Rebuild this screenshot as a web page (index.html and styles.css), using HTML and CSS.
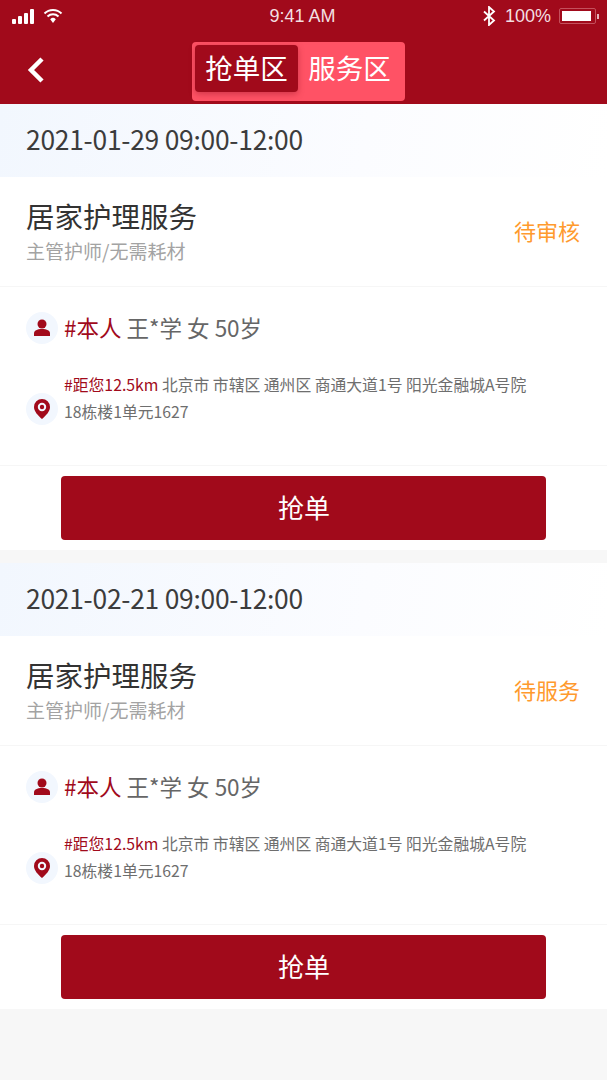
FILE: index.html
```html
<!DOCTYPE html>
<html lang="zh">
<head>
<meta charset="utf-8">
<title>抢单区</title>
<link rel="stylesheet" href="styles.css">
</head>
<body>
<header class="top">
  <div class="status">
    <div class="status-left">
      <svg class="signal" width="24" height="16" viewBox="0 0 24 16"><rect x="0" y="11" width="4" height="5" rx="1"/><rect x="6" y="8" width="4" height="8" rx="1"/><rect x="12" y="5" width="4" height="11" rx="1"/><rect x="18" y="1" width="4" height="15" rx="1"/></svg>
      <svg class="wifi" width="20" height="16" viewBox="0 0 20 16"><path d="M1.5 5.5a12 12 0 0 1 17 0" /><path d="M4.5 8.5a8 8 0 0 1 11 0"/><path class="wifi-dot" d="M7.2 11.2a4 4 0 0 1 5.6 0L10 15z"/></svg>
    </div>
    <div class="time">9:41 AM</div>
    <div class="status-right">
      <svg class="bt" width="14" height="20" viewBox="0 0 14 20"><path d="M2 5.5l10 9-5 4.500V1l5 4.500-10 9"/></svg>
      <span class="pct">100%</span>
      <div class="battery"><div class="battery-fill"></div></div>
      <div class="battery-tip"></div>
    </div>
  </div>
  <nav class="nav">
    <svg class="back" width="20" height="28" viewBox="0 0 20 28"><path d="M16 3L5 14l11 11"/></svg>
    <div class="tabs">
      <div class="tab tab-active">抢单区</div>
      <div class="tab">服务区</div>
    </div>
  </nav>
</header>
<main>
  <section class="card">
    <div class="date">2021-01-29 09:00-12:00</div>
    <div class="service">
      <div>
        <div class="service-name">居家护理服务</div>
        <div class="service-sub">主管护师/无需耗材</div>
      </div>
      <div class="state">待审核</div>
    </div>
    <div class="info">
      <div class="person">
        <span class="icon-dot"><svg width="16" height="18" viewBox="0 0 16 18"><circle cx="8" cy="5" r="4.500"/><path d="M0 17v-2.500C0 11.500 3 10 8 10s8 1.500 8 4.500V17z"/></svg></span>
        <span class="person-text"><span class="red">#本人</span> 王*学 女 50岁</span>
      </div>
      <div class="addr">
        <span class="icon-dot"><svg width="16" height="20" viewBox="0 0 16 20"><path fill-rule="evenodd" d="M8 0a8 8 0 0 1 8 8c0 4.500-4 8.500-8 12C4 16.500 0 12.500 0 8a8 8 0 0 1 8-8zm0 3.800a4.200 4.200 0 1 0 0 8.400 4.200 4.200 0 0 0 0-8.400z"/><circle cx="8" cy="8" r="2.200"/></svg></span>
        <p class="addr-text"><span class="red">#距您12.5km</span> 北京市 市辖区 通州区 商通大道1号 阳光金融城A号院<br>18栋楼1单元1627</p>
      </div>
    </div>
    <div class="action"><button class="grab">抢单</button></div>
  </section>
  <section class="card">
    <div class="date">2021-02-21 09:00-12:00</div>
    <div class="service">
      <div>
        <div class="service-name">居家护理服务</div>
        <div class="service-sub">主管护师/无需耗材</div>
      </div>
      <div class="state">待服务</div>
    </div>
    <div class="info">
      <div class="person">
        <span class="icon-dot"><svg width="16" height="18" viewBox="0 0 16 18"><circle cx="8" cy="5" r="4.500"/><path d="M0 17v-2.500C0 11.500 3 10 8 10s8 1.500 8 4.500V17z"/></svg></span>
        <span class="person-text"><span class="red">#本人</span> 王*学 女 50岁</span>
      </div>
      <div class="addr">
        <span class="icon-dot"><svg width="16" height="20" viewBox="0 0 16 20"><path fill-rule="evenodd" d="M8 0a8 8 0 0 1 8 8c0 4.500-4 8.500-8 12C4 16.500 0 12.500 0 8a8 8 0 0 1 8-8zm0 3.800a4.200 4.200 0 1 0 0 8.400 4.200 4.200 0 0 0 0-8.400z"/><circle cx="8" cy="8" r="2.200"/></svg></span>
        <p class="addr-text"><span class="red">#距您12.5km</span> 北京市 市辖区 通州区 商通大道1号 阳光金融城A号院<br>18栋楼1单元1627</p>
      </div>
    </div>
    <div class="action"><button class="grab">抢单</button></div>
  </section>
</main>
</body>
</html>
```
FILE: styles.css
```css
* { box-sizing: border-box; }
html, body { margin: 0; padding: 0; }
body {
  width: 607px;
  height: 1080px;
  overflow: hidden;
  background: #f7f7f7;
  font-family: "Noto Sans CJK SC", "Noto Sans", sans-serif;
  color: #333;
}
.top { background: #a10a1b; height: 104px; }
.status {
  height: 32px;
  display: flex;
  align-items: center;
  justify-content: space-between;
  position: relative;
  padding: 0 8px 0 12px;
  color: #f3dfe1;
}
.status-left, .status-right { display: flex; align-items: center; }
.signal { fill: #fff; margin-right: 7px; }
.wifi { fill: none; stroke: #fff; stroke-width: 2; }
.wifi-dot { fill: #fff; stroke: none; }
.time {
  position: absolute;
  left: 0;
  right: 2px;
  text-align: center;
  font: 18px "Liberation Sans", sans-serif;
}
.bt { fill: none; stroke: #fff; stroke-width: 1.800; margin-right: 9px; }
.pct { font: 18px "Liberation Sans", sans-serif; margin-right: 8px; }
.battery {
  width: 37px;
  height: 16px;
  border: 1px solid #c4505c;
  border-radius: 2px;
  padding: 2px;
}
.battery-fill { width: 29px; height: 100%; background: #fff; }
.battery-tip { width: 2px; height: 5px; background: #e6b5ba; margin-left: 1px; }
.nav {
  height: 72px;
  display: flex;
  align-items: flex-start;
  justify-content: center;
  position: relative;
  padding: 10px 10px 0 0;
}
.back {
  position: absolute;
  left: 26px;
  top: 24px;
  fill: none;
  stroke: #fff;
  stroke-width: 4.500;
}
.tabs {
  width: 213px;
  height: 59px;
  padding: 3px;
  background: #ff5265;
  border-radius: 4px;
  display: flex;
}
.tab {
  width: 103px;
  height: 47px;
  line-height: 44px;
  text-align: center;
  font-size: 27.500px;
  color: #fff;
}
.tab-active {
  background: #a10a1b;
  border-radius: 4px;
  box-shadow: 0 2px 6px rgba(120, 0, 20, .35);
}
.card { background: #fff; margin-bottom: 13px; }
.date {
  height: 73px;
  line-height: 69px;
  padding-left: 26px;
  font-size: 26.400px;
  letter-spacing: -.25px;
  color: #3c3c3c;
  background: linear-gradient(100deg, #f2f7fe 0%, #fbfcff 60%, #fff 100%);
}
.service {
  height: 110px;
  padding: 0 27px 0 26px;
  border-bottom: 1px solid #f6f6f6;
  display: flex;
  align-items: center;
  justify-content: space-between;
}
.service-name {
  font-size: 28.500px;
  line-height: 36px;
  color: #333;
}
.service-sub {
  font-size: 19px;
  line-height: 28px;
  margin-top: 3px;
  color: #a3a3a3;
}
.state { font-size: 22px; color: #ff9a2e; margin-top: -3px; }
.info {
  height: 179px;
  padding: 25px 26px 0;
  border-bottom: 1px solid #f6f6f6;
}
.person { display: flex; align-items: center; height: 32px; }
.icon-dot {
  width: 32px;
  height: 32px;
  border-radius: 50%;
  background: #f2f7fe;
  display: flex;
  align-items: center;
  justify-content: center;
  flex: none;
  margin-right: 7px;
  fill: #a10a1b;
}
.person-text { font-size: 22.500px; color: #666; line-height: 28px; margin: -2px 0 0 -1px; }
.red { color: #a10a1b; }
.addr { display: flex; align-items: flex-start; margin-top: 27px; }
.addr .icon-dot { margin-top: 22px; }
.addr-text {
  margin: 0 0 0 -1px;
  font-size: 15.800px;
  line-height: 27px;
  color: #6e6e6e;
  white-space: nowrap;
}
.action { height: 84px; padding: 10px 1px 0 0; display: flex; justify-content: center; }
.grab {
  width: 485px;
  height: 64px;
  padding: 0 0 4px 2px;
  border: 0;
  border-radius: 4px;
  background: #a10a1b;
  color: #fff;
  font-family: inherit;
  font-size: 26px;
}
```
